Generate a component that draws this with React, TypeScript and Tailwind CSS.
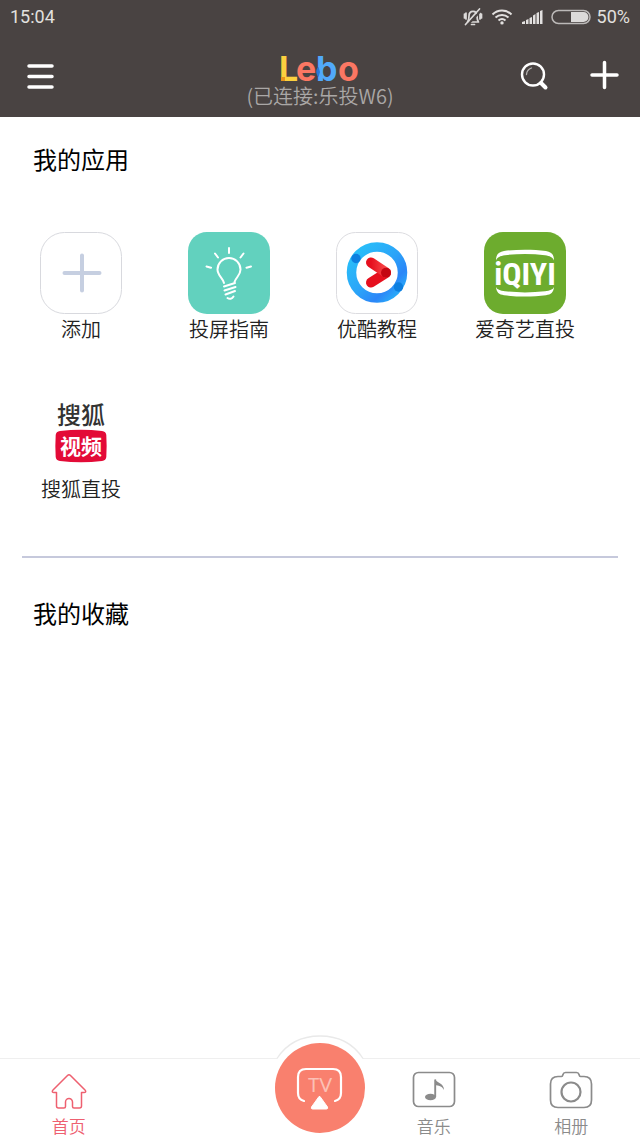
import React from 'react';

interface AppItem {
  label: string;
  icon: React.ReactNode;
}

const BellOffIcon = () => (
  <svg width="20" height="20" viewBox="0 0 20 20" fill="none" stroke="#dcdad9" strokeWidth="1.7" strokeLinecap="round">
    <path d="M4.500 15h11c-1.300-1.500-1.500-2.500-1.500-6 0-2.800-1.600-4.700-4-4.700S6 6.200 6 9c0 3.500-.2 4.500-1.500 6z" strokeLinejoin="round" />
    <path d="M8.500 17.500h3M1.500 7v4M3 6v6M18.500 7v4M17 6v6" />
    <path d="M4 18.500L18 3.500" stroke="#494342" strokeWidth="2" />
    <path d="M2.500 17.500L16.500 2" />
  </svg>
);

const WifiIcon = () => (
  <svg width="22" height="16" viewBox="0 0 22 16" fill="none" stroke="#e2e0df" strokeWidth="2">
    <path d="M1.500 5.500C6.800.2 15.200.2 20.500 5.500" />
    <path d="M4.500 8.600c3.700-3.500 9.300-3.500 13 0" />
    <path d="M7.500 11.600c2.100-1.900 4.900-1.900 7 0" />
    <circle cx="11" cy="13.900" r="1.700" fill="#e2e0df" stroke="none" />
  </svg>
);

const SignalIcon = () => (
  <svg width="22" height="16" viewBox="0 0 22 16" fill="#e2e0df">
    <path d="M1 15v-2l3-1v3zM5 15v-4l2.500-1v5zM8.500 15V9l2.500-1v7zM12 15V6.500L14.500 5v10zM15.500 15V4L18 3v12zM19 15V2l2.500-1v14z" />
  </svg>
);

const BatteryIcon = () => (
  <svg width="40" height="16" viewBox="0 0 40 16">
    <rect x="1" y="1.500" width="38" height="13" rx="6.500" fill="none" stroke="#bcb9b8" strokeWidth="1.500" />
    <path d="M20 3h12.500a5 5 0 0 1 0 10H20z" fill="#dcdad9" />
  </svg>
);

const LeboLogo = () => (
  <svg width="82" height="32" viewBox="0 0 82 32" className="overflow-visible font-[Inter,sans-serif]" fontSize="34" fontWeight="700">
    <text x="0" y="29" fill="#fbd13f">L</text>
    <text x="17" y="29" fill="#fb7763">e</text>
    <text x="37" y="29" fill="#51a9fa">b</text>
    <text x="59" y="29" fill="#fb7763">o</text>
    <rect x="2" y="25" width="4" height="4" fill="#e8961c" />
    <path d="M39.500 15c-3 2-3 7 0 10l1.500-5z" fill="#2877d8" />
  </svg>
);

const AddTile = () => (
  <svg width="82" height="82" viewBox="0 0 82 82" fill="none">
    <rect x=".5" y=".5" width="81" height="81" rx="24" fill="#fff" stroke="#d8d9de" />
    <path d="M24.500 41h35M42 23.500v35" stroke="#c6cfe1" strokeWidth="4" strokeLinecap="round" />
  </svg>
);

const BulbTile = () => (
  <svg width="82" height="82" viewBox="0 0 82 82" fill="none" stroke="#fff" strokeWidth="2" strokeLinecap="round">
    <rect width="82" height="82" rx="19" fill="#62d1be" stroke="none" />
    <path d="M36 51c-1-5-6.500-7.500-6.500-13.500a11.500 11.500 0 0 1 23 0C52.500 43.500 48 45 46.500 50" />
    <path d="M36 54.500l11-3.500M36.500 58.500l11-3.500M37.500 62.500l9.500-3.500M39.500 66c2 1.500 4.500 1 6-1.500" />
    <path d="M41 16v5M27 21.500l3 4M55.500 21.500l-3 4M18.500 34.500l4.500 1.200M63 34.500l-4.500 1.200" />
  </svg>
);

const YoukuTile = () => (
  <svg width="82" height="82" viewBox="0 0 82 82" fill="none">
    <defs>
      <linearGradient id="ring" x1="0" y1="0" x2="1" y2="1">
        <stop offset="0" stopColor="#28c3f9" />
        <stop offset=".5" stopColor="#2ba4f8" />
        <stop offset=".75" stopColor="#2b86f8" />
        <stop offset="1" stopColor="#28bdf9" />
      </linearGradient>
      <linearGradient id="arm" x1="0" y1="0" x2="1" y2="0">
        <stop offset="0" stopColor="#e60f1e" />
        <stop offset="1" stopColor="#f8494a" />
      </linearGradient>
    </defs>
    <rect x=".5" y=".5" width="81" height="81" rx="19" fill="#fff" stroke="#dcdce0" />
    <circle cx="41" cy="40.500" r="25.500" stroke="url(#ring)" strokeWidth="9.500" />
    <circle cx="20" cy="26.500" r="4.700" fill="#0d7fe0" />
    <circle cx="62.500" cy="55" r="4.700" fill="#0d7fe0" />
    <path d="M35 50.500L50 41" stroke="#e60f1e" strokeWidth="10" strokeLinecap="round" />
    <path d="M35 30.500L50 40.500" stroke="url(#arm)" strokeWidth="10" strokeLinecap="round" />
    <circle cx="50" cy="40.700" r="5" fill="#c40612" />
  </svg>
);

const IqiyiTile = () => (
  <svg width="82" height="82" viewBox="0 0 82 82" fill="none">
    <rect width="82" height="82" rx="19" fill="#6dac2e" />
    <path d="M12 28.500c0-6 2.500-8.500 8-9.500 13-1.800 29-1.800 42 0 5.500 1 8 3.500 8 9.500-1.500-3.500-4-4.500-9-5.300-13-1.600-27-1.600-40 0-5 .8-7.500 1.800-9 5.300z" fill="#fff" />
    <path d="M12 55c1 2.500 4 3.700 9 4.300 13 1.500 27 1.500 40 0 5-.6 8-1.800 9-4.300-.5 5.500-3 7.500-8 8.200-13 1.800-29 1.800-42 0-5-.7-7.500-2.700-8-8.200z" fill="#fff" />
    <text x="41" y="53" textAnchor="middle" fill="#fff" fontSize="32" fontWeight="700" className="font-['Liberation_Sans_Narrow','Roboto_Condensed',sans-serif]">iQIYI</text>
  </svg>
);

const SohuTile = () => (
  <svg width="82" height="82" viewBox="0 0 82 82" textAnchor="middle">
    <text x="41" y="32" fill="#333" fontSize="24" fontWeight="500">搜狐</text>
    <path d="M20 39q21-2.500 42 0 4 .5 4.300 4 .7 11 0 22-.3 3.500-4.300 4-21 2.500-42 0-4-.5-4.300-4-.7-11 0-22 .3-3.500 4.300-4z" fill="#e30b37" />
    <text x="41" y="62" fill="#fff" fontSize="21" fontWeight="700">视频</text>
  </svg>
);

const HomeIcon = () => (
  <svg width="44" height="40" viewBox="0 0 44 40" fill="none" stroke="#ee6070" strokeWidth="1.500" strokeLinejoin="round">
    <path d="M20.500 5.500q1.500-1.500 3 0L38 20c1.500 1.500.5 2.500-1 2.500h-2.500V36q0 2-2 2H27q-1.500 0-1.500-1.500V32a3.500 3.500 0 0 0-7 0v4.500q0 1.500-1.500 1.500h-5.500q-2 0-2-2V22.500H7c-1.500 0-2.500-1-1-2.500z" />
  </svg>
);

const MusicIcon = () => (
  <svg width="44" height="40" viewBox="0 0 44 40" fill="none" stroke="#8b8b8b" strokeWidth="1.700">
    <rect x="1.500" y="2.500" width="41" height="34" rx="5" />
    <ellipse cx="18.500" cy="27" rx="5.500" ry="3.300" fill="#8b8b8b" stroke="none" />
    <path d="M23.200 27V9.500" strokeWidth="1.900" />
    <path d="M23 9c1 4 9 3.500 9 11-2-4-5.500-4.500-9-5z" fill="#8b8b8b" stroke="none" />
  </svg>
);

const CameraIcon = () => (
  <svg width="44" height="40" viewBox="0 0 44 40" fill="none" stroke="#8b8b8b" strokeWidth="1.700" strokeLinejoin="round">
    <path d="M9 6.500h3.500q1 0 1.500-2 .5-2 2.500-2h11q2 0 2.500 2 .5 2 1.500 2H35q7.500 0 7.500 7.500v16q0 7.500-7.500 7.500H9q-7.500 0-7.500-7.500V14q0-7.500 7.500-7.500z" />
    <circle cx="22" cy="22" r="9.500" strokeWidth="2.200" />
  </svg>
);

// Cast button with the bump that lifts the nav border around it
const CastIcon = () => (
  <svg width="114" height="104" viewBox="0 0 114 104" fill="none">
    <path d="M14 25C24 9 40 2 57 2s33 7 43 23v20H14z" fill="#fff" />
    <path d="M14 24.500C24 9 40 2 57 2s33 7 43 22.500" stroke="#e9e9e9" strokeWidth="1.300" />
    <circle cx="57" cy="54" r="45" fill="#f9806e" />
    <path d="M41 67c-4-1-6-3.500-6-8V43q0-8 8-8h27q8 0 8 8v16c0 4.500-2 7-6 8" stroke="#fff" strokeWidth="2.200" strokeLinecap="round" />
    <path d="M56 62.500l-7.500 10.500q-.7 2 1 2h14q1.700 0 1-2L57 62.500z" fill="#fff" stroke="#fff" strokeLinejoin="round" />
    <text x="57" y="58" textAnchor="middle" fill="#fcc0b6" fontSize="19" className="font-[Lato,sans-serif]">TV</text>
  </svg>
);

const apps: AppItem[] = [
  { label: '添加', icon: <AddTile /> },
  { label: '投屏指南', icon: <BulbTile /> },
  { label: '优酷教程', icon: <YoukuTile /> },
  { label: '爱奇艺直投', icon: <IqiyiTile /> },
  { label: '搜狐直投', icon: <SohuTile /> },
];

const NavItem = ({ label, icon, active = false }: AppItem & { active?: boolean }) => (
  <button className={`flex flex-1 flex-col items-center gap-1 text-[17px] leading-6 ${active ? 'text-[#ee6070]' : 'text-[#8b8b8b]'}`}>
    {icon}
    <span className="font-[350]">{label}</span>
  </button>
);

const App: React.FC = () => {
  return (
    <div className="flex min-h-screen flex-col bg-white font-['Noto_Sans_CJK_SC',sans-serif]">
      <header className="bg-[#494342]">
        <div className="flex h-[34px] items-center justify-between px-[10px] font-[Roboto,sans-serif] text-lg text-[#e2e0df]">
          <span>15:04</span>
          <div className="flex items-center gap-2">
            <BellOffIcon />
            <WifiIcon />
            <SignalIcon />
            <BatteryIcon />
            <span className="-ml-0.5">50%</span>
          </div>
        </div>

        <div className="grid grid-cols-[1fr_auto_1fr] items-start px-5 pb-[9px] pt-[18px]">
          <button aria-label="菜单" className="mt-2 w-fit pl-1">
            <svg width="32" height="32" viewBox="0 0 32 32" stroke="#fff" strokeWidth="3.500" strokeLinecap="round">
              <path d="M5 6h23M5 16.500h23M5 27h23" />
            </svg>
          </button>

          <div className="flex flex-col items-center">
            <LeboLogo />
            <p className="text-xl font-[350] leading-6 text-[#aaa7a6]">(已连接:乐投W6)</p>
          </div>

          <div className="mt-2 flex justify-end gap-[38px]">
            <button aria-label="搜索">
              <svg width="32" height="32" viewBox="0 0 32 32" fill="none" stroke="#fff" strokeLinecap="round">
                <circle cx="15" cy="14.500" r="11" strokeWidth="2.400" />
                <path d="M23 23l4.500 4.500" strokeWidth="4" />
                <path d="M8.500 14.500c.3-3.500 2-5.500 5-6.500" strokeWidth="1.300" stroke="#b5b2b1" />
              </svg>
            </button>
            <button aria-label="添加设备">
              <svg width="32" height="32" viewBox="0 0 32 32" stroke="#fff" strokeWidth="3.500" strokeLinecap="round">
                <path d="M4 15h25M16.500 2.500v25" />
              </svg>
            </button>
          </div>
        </div>
      </header>

      <main className="flex-1 pt-6">
        <section>
          <h2 className="px-[33px] text-2xl leading-9 text-black">我的应用</h2>
          <div className="mt-[55px] grid grid-cols-4 gap-y-12 pl-[7px] pr-[41px]">
            {apps.map((app) => (
              <button key={app.label} className="flex flex-col items-center">
                {app.icon}
                <span className="whitespace-nowrap text-xl font-[350] leading-[30px] text-[#222]">{app.label}</span>
              </button>
            ))}
          </div>
        </section>

        <hr className="mx-[22px] mt-[52px] border-t-2 border-[#c6c9dc]" />

        <section className="mt-[37px]">
          <h2 className="px-[33px] text-2xl leading-9 text-black">我的收藏</h2>
        </section>
      </main>

      <nav className="flex border-t border-[#efefef]">
        <div className="flex flex-1 pt-[11px]">
          <NavItem label="首页" icon={<HomeIcon />} active />
          <div className="flex-1" />
        </div>
        <button aria-label="投屏" className="-mx-3 -mt-[25px]">
          <CastIcon />
        </button>
        <div className="flex flex-1 pt-[11px]">
          <NavItem label="音乐" icon={<MusicIcon />} />
          <NavItem label="相册" icon={<CameraIcon />} />
        </div>
      </nav>
    </div>
  );
};

export default App;
